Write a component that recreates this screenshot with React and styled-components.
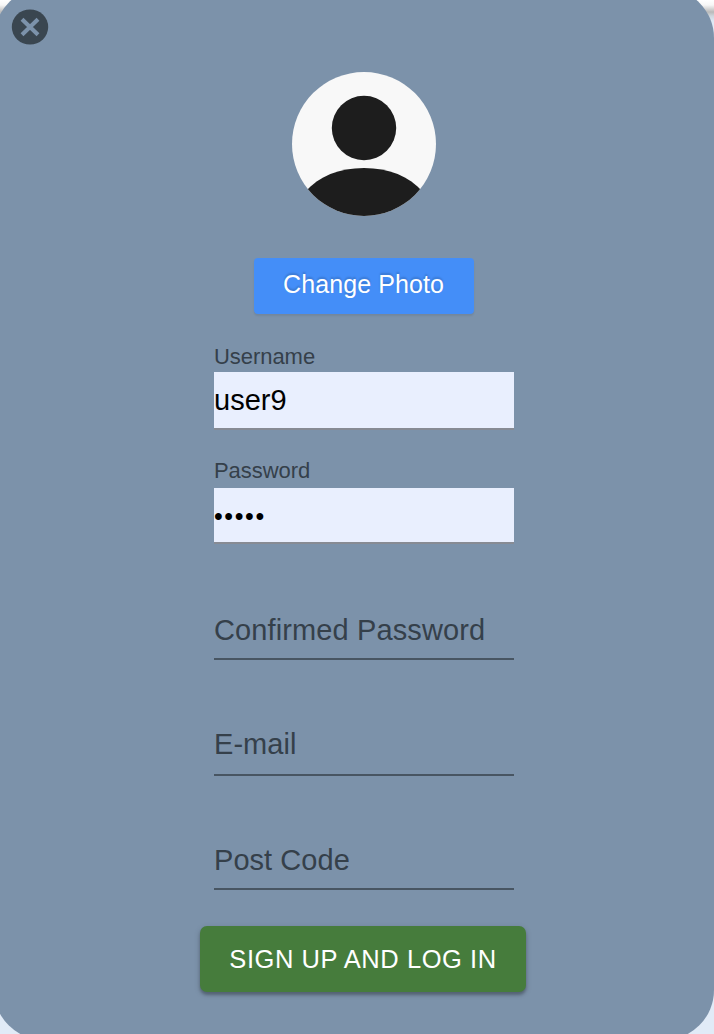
import React from "react";
import styled, { createGlobalStyle } from "styled-components";

const GlobalStyle = createGlobalStyle`
  * { box-sizing: border-box; }
  body {
    margin: 0;
    font-family: "Liberation Sans", Helvetica, Arial, sans-serif;
  }
`;

const Page = styled.div`
  height: 1034px;
  overflow: hidden;
  display: flow-root;
  background: linear-gradient(#fff 0, #f7f7f7 5px, #b9b9b9 12px, #cfd6dd 16px, #dde8f5 21px, #e1ebf7 28px);
`;

const Dialog = styled.main`
  width: 720px;
  height: 1052px;
  margin: -12px 0 0 -6px;
  padding: 21px 0 0 17px;
  border-radius: 50px;
  background: #7c92aa;
`;

const CloseButton = styled.button`
  display: block;
  width: 38px;
  height: 38px;
  padding: 0;
  border: 0;
  background: none;
  svg { display: block; }
`;

const Form = styled.form`
  width: 326px;
  margin: 25px 0 0 189px;
  display: flex;
  flex-direction: column;
  align-items: center;
`;

const Avatar = styled.svg`
  display: block;
  width: 144px;
  height: 144px;
  margin-left: 2px;
  border-radius: 50%;
`;

const PhotoButton = styled.button`
  width: 220px;
  height: 56px;
  margin: 42px 0 0 2px;
  padding: 0 1px 5px 0;
  border: 0;
  border-radius: 4px;
  background: #448ef8;
  color: #fff;
  font: 25px/50px "Liberation Sans", Arial, sans-serif;
  letter-spacing: 0.08px;
  text-shadow: 0 -2px 2px rgba(0, 0, 0, 0.16);
  box-shadow: 0 2px 2px rgba(0, 0, 0, 0.08);
`;

const Fields = styled.div`
  width: 300px;
  margin: 28px 0 0 2px;
`;

const Field = styled.div`
  height: ${(p) => p.$height}px;
  display: flex;
  flex-direction: column;
`;

const Label = styled.label`
  height: 30px;
  padding-top: ${(p) => p.$top}px;
  font-size: 22px;
  line-height: 26px;
  letter-spacing: -0.05px;
  color: #35404a;
`;

const Input = styled.input`
  width: 300px;
  height: ${(p) => p.$height}px;
  margin-top: ${(p) => p.$gap || 0}px;
  padding: ${(p) => p.$padding || "0"};
  border: 0;
  border-bottom: 2px solid ${(p) => (p.$filled ? "#878b94" : "#485562")};
  border-radius: 0;
  outline: 0;
  background: ${(p) => (p.$filled ? "#e9effe" : "transparent")};
  color: #000;
  font: 29px "Liberation Sans", Arial, sans-serif;
  letter-spacing: ${(p) => p.$spacing || 0}px;
  &::placeholder { color: #35404a; opacity: 1; }
`;

const PasswordInput = styled(Input)`
  font-size: 25px;
  letter-spacing: 1.6px;
`;

const SubmitButton = styled.button`
  width: 326px;
  height: 66px;
  margin-top: 36px;
  padding: 0;
  border: 0;
  border-radius: 7px;
  background: #467c3c;
  color: #fff;
  font: 25.5px/66px "Liberation Sans", Arial, sans-serif;
  letter-spacing: 0.55px;
  white-space: nowrap;
  box-shadow: 0 3px 3px rgba(0, 0, 0, 0.24), 0 2px 6px rgba(0, 0, 0, 0.16);
`;

export default function App() {
  return (
    <Page>
      <GlobalStyle />
      <Dialog>
        <CloseButton type="button" aria-label="Close">
          <svg width="38" height="38" viewBox="0 0 38 38">
            <ellipse cx="19" cy="18" rx="18.2" ry="17.6" fill="#3a4650" />
            <path d="M11 10.3l16 15.4M27 10.3l-16 15.4" stroke="#7c92aa" strokeWidth="4.1" />
          </svg>
        </CloseButton>
        <Form>
          <Avatar viewBox="0 0 144 144">
            <rect width="144" height="144" fill="#f8f8f8" />
            <circle cx="72" cy="56" r="32.2" fill="#1d1d1d" />
            <path d="M13 120C27 104 47 96 72 96s45 8 59 24v24H13z" fill="#1d1d1d" />
          </Avatar>
          <PhotoButton type="button">Change Photo</PhotoButton>
          <Fields>
            <Field $height={116}>
              <Label htmlFor="username" $top={2}>Username</Label>
              <Input id="username" $filled $height={58} defaultValue="user9" />
            </Field>
            <Field $height={114}>
              <Label htmlFor="password" $top={0}>Password</Label>
              <PasswordInput id="password" type="password" $filled $height={56} $padding="2px 0 0" defaultValue="12345" />
            </Field>
            <Field $height={88}>
              <Input aria-label="Confirmed Password" placeholder="Confirmed Password" $gap={30} $height={58} $spacing={0.12} />
            </Field>
            <Field $height={116}>
              <Input aria-label="E-mail" placeholder="E-mail" $gap={58} $height={58} $padding="0 0 3px" $spacing={0.05} />
            </Field>
            <Field $height={114}>
              <Input aria-label="Post Code" placeholder="Post Code" $gap={58} $height={56} $padding="0 0 1px" $spacing={0.05} />
            </Field>
          </Fields>
          <SubmitButton type="button">SIGN UP AND LOG IN</SubmitButton>
        </Form>
      </Dialog>
    </Page>
  );
}
